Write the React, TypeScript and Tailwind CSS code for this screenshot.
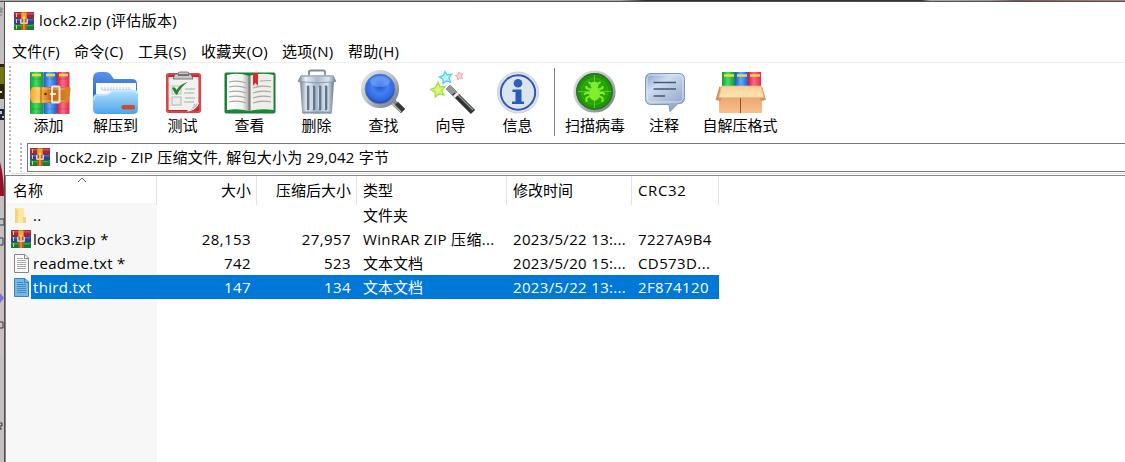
import React from 'react';

function RarIcon({ className = '' }: { className?: string }) {
  return (
    <svg viewBox="0 0 20 18" className={`shrink-0 ${className}`}>
      <rect x="0" y="0" width="20" height="6" rx="0.6" fill="#a3263f" />
      <rect x="1" y="1" width="18.5" height="1.5" fill="#cf4d63" />
      <rect x="0" y="6" width="20" height="6" rx="0.6" fill="#333f94" />
      <rect x="1" y="7" width="18" height="1.5" fill="#5968bd" />
      <rect x="0" y="12" width="20" height="6" rx="0.6" fill="#167a35" />
      <rect x="1" y="13" width="18" height="1.5" fill="#38a555" />
      <path d="M2.5 1v4M2.5 7v4M2.5 13v4" stroke="#e6d05b" strokeWidth="1" />
      <rect x="7.2" y="0" width="5.6" height="18" rx="1" fill="#b85e1c" />
      <rect x="7.4" y="0.5" width="5.2" height="6.5" rx="1" fill="#f6a526" />
      <path d="M6.8 6.8v4.4h6.4v-4.4" fill="none" stroke="#f3eee5" strokeWidth="1.2" />
      <path d="M10 4.5v6" stroke="#ffe1a0" strokeWidth="1.3" />
      <path d="M10 12v6" stroke="#e68b2d" strokeWidth="1.8" />
    </svg>
  );
}

function Defs() {
  return (
    <svg width="0" height="0" className="absolute">
      <defs>
        <linearGradient id="green"><stop stopColor="#129b35" /><stop offset=".45" stopColor="#45dc67" /><stop offset="1" stopColor="#119336" /></linearGradient>
        <linearGradient id="blue"><stop stopColor="#1b58c5" /><stop offset=".45" stopColor="#65a8ff" /><stop offset="1" stopColor="#1d5ecb" /></linearGradient>
        <linearGradient id="red"><stop stopColor="#d2173b" /><stop offset=".45" stopColor="#ff6b86" /><stop offset="1" stopColor="#e02a4d" /></linearGradient>
        <linearGradient id="belt"><stop stopColor="#f0a52c" /><stop offset=".2" stopColor="#ffcf63" /><stop offset=".5" stopColor="#c86a14" /><stop offset="1" stopColor="#d98428" /></linearGradient>
        <linearGradient id="folder" x2="0" y2="1"><stop stopColor="#b5e2ff" /><stop offset="1" stopColor="#4ba3e9" /></linearGradient>
        <linearGradient id="folderBack" x2="0" y2="1"><stop stopColor="#5a93ea" /><stop offset="1" stopColor="#265fc6" /></linearGradient>
        <linearGradient id="metal"><stop stopColor="#6f8196" /><stop offset=".2" stopColor="#e9f1f8" /><stop offset=".5" stopColor="#a9b9ca" /><stop offset=".8" stopColor="#dce6ef" /><stop offset="1" stopColor="#66788d" /></linearGradient>
        <linearGradient id="rim" x2="1" y2="1"><stop stopColor="#e3e6e9" /><stop offset=".5" stopColor="#b9c0c7" /><stop offset="1" stopColor="#6f7780" /></linearGradient>
        <radialGradient id="lens" cy=".42"><stop stopColor="#2352cc" /><stop offset=".45" stopColor="#4380f0" /><stop offset=".8" stopColor="#3169df" /><stop offset="1" stopColor="#234bb5" /></radialGradient>
        <linearGradient id="bubble" x2=".7" y2="1"><stop stopColor="#7f9ccc" /><stop offset=".35" stopColor="#cfdcf0" /><stop offset=".6" stopColor="#b7c7e0" /><stop offset="1" stopColor="#8fa4c6" /></linearGradient>
        <linearGradient id="carton" x2="0" y2="1"><stop stopColor="#e09a64" /><stop offset=".5" stopColor="#f0aa74" /><stop offset="1" stopColor="#f9c08c" /></linearGradient>
        <linearGradient id="flap" x2="0" y2="1"><stop stopColor="#fbd096" /><stop offset="1" stopColor="#ffe3b4" /></linearGradient>
        <linearGradient id="page"><stop stopColor="#fff" /><stop offset=".7" stopColor="#f2f2ee" /><stop offset="1" stopColor="#aaa" /></linearGradient>
        <radialGradient id="scan"><stop stopColor="#38bd0c" /><stop offset="1" stopColor="#159000" /></radialGradient>
      </defs>
    </svg>
  );
}

function Icon({ name }: { name: string }) {
  return (
    <svg width="52" height="46" viewBox="0 0 52 46" className="shrink-0 overflow-visible">
      {name === 'add' && <>
        <rect x="7" y="3" width="13.5" height="42" rx="1" fill="url(#green)" />
        <rect x="20.5" y="3" width="13.5" height="42" rx="1" fill="url(#blue)" />
        <rect x="34" y="3" width="12.5" height="42" rx="1" fill="url(#red)" />
        <path d="M9 6h9M23 6h9M36 6h9" stroke="#eadb46" strokeWidth="2.5" />
        <path d="M9 10h9M23 10h9M36 10h9M9 40h9M23 40h9M36 40h9" stroke="#00000028" />
        <path d="M10 18H46q2 0 1.5 3l-2 12q-.2 1-2 1H10q-3-2-3-8t3-8Z" fill="url(#belt)" />
        <path d="M11 20h31M11 32h31" stroke="#ffe09a" strokeWidth=".8" opacity=".7" />
        <path d="M18 18v16" stroke="#a75712" />
        <circle cx="22.5" cy="25" r="1.3" fill="#64340d" />
        <rect x="29" y="17.5" width="7.5" height="16" rx="1" fill="none" stroke="#eeeae2" strokeWidth="2" />
        <path d="M27 25h6" stroke="#fff5dd" strokeWidth="1.8" />
      </>}
      {name === 'extract' && <>
        <path d="M3 10q0-7 6-7h6q4 0 6 3l3 4h18q5 0 5 5v15H3Z" fill="url(#folderBack)" />
        <path d="M6 14h40v16H6Z" fill="#f7fbfd" />
        <path d="M12 21h30M12 18v3m3-3v3m3-3v3m3-3v3m3-3v3m3-3v3m3-3v3m3-3v3m3-3v3m3-3v3" stroke="#c3ccd5" strokeWidth="1" />
        <path d="M3 30q0-5 4-5h8q4 0 6-3 1-1 3-1h21q3 0 3 4v15q0 5-5 5H8q-5 0-5-5Z" fill="url(#folder)" />
        <path d="M4 31q0-5 4-5h7q4 0 6-3 1-1 3-1h20q3 0 3 3" fill="none" stroke="#d4f2ff" />
        <rect x="32" y="36.5" width="12.5" height="3.5" rx="1" fill="#df4721" stroke="#b94126" strokeWidth=".7" />
      </>}
      {name === 'test' && <>
        <rect x="9" y="4" width="35" height="40" rx="3" fill="#cf2432" />
        <rect x="10" y="5" width="33" height="38" rx="2" fill="none" stroke="#ea6265" />
        <path d="M11.5 8h30v26l-7 7h-23Z" fill="#f1f1ed" />
        <path d="M41.5 34h-5q0 5-6 8 9-1 11-8Z" fill="#c6c8c4" stroke="#fff" />
        <path d="M16 10l2-5h3q0-2 2-2h7q2 0 2 2h2l2 5Z" fill="#c5c7cb" stroke="#6d5b60" strokeWidth=".8" />
        <path d="M21 6h11" stroke="#555" strokeWidth="1.5" />
        <rect x="15" y="17" width="9" height="8" fill="#ececea" stroke="#c1c1be" />
        <rect x="15" y="28" width="9" height="8" fill="#ececea" stroke="#b5b5b2" />
        <path d="M28 20h10M27 24h10M28 29h10M27 33h10" stroke="#aaa" strokeWidth="1.1" />
        <path d="M15 19q3-2 4.5 2Q23 15 31 13q-7 4-11 13-2-1-5-7Z" fill="#21862f" />
      </>}
      {name === 'view' && <>
        <rect x="1" y="4" width="50" height="40" rx="1" fill="#128c36" stroke="#27733a" />
        <path d="M3 6q12-3 22 1v35q-11-3-22-1Z" fill="url(#page)" />
        <path d="M25.5 7q12-4 24-1v35q-12-2-24 1Z" fill="#f0eeea" />
        <path d="M25.5 7v35" stroke="#808080" strokeWidth="2.2" />
        <path d="M5 13q9-2 17 1M5 18q9-2 17 1M5 23q9-2 17 1M5 28q9-2 17 1M5 33q9-2 17 1M29 19q9-3 18-1M29 24q9-3 18-1M29 29q9-3 18-1M29 34q9-3 18-1M36 12l11-.5" fill="none" stroke="#aaa9a6" strokeWidth="1.2" />
        <path d="M29 4h5v13l-2.5-3-2.5 3Z" fill="#d92c29" />
      </>}
      {name === 'delete' && <>
        <path d="M18 7V3q0-1.5 1.5-1.5h13Q34 1.5 34 3v4" fill="none" stroke="#7f8b97" strokeWidth="1.8" />
        <path d="M9 12h34l-2 31q0 2-2 2H13q-2 0-2-2Z" fill="url(#metal)" />
        <path d="M17 18v22M23 18v22M29 18v22M35 18v22" stroke="#63758b" strokeWidth="2.8" strokeLinecap="round" />
        <path d="M15.5 18v22M21.5 18v22M27.5 18v22M33.5 18v22" stroke="#e0e9f1" strokeWidth=".8" />
        <path d="M10 6.5h32l3 6q-18 3-38 0Z" fill="url(#metal)" stroke="#7b8b9d" strokeWidth=".8" />
        <path d="M10 7h32" stroke="#aab7c4" strokeWidth="2" />
        <path d="M12 43.5h28" stroke="#8699ad" strokeWidth="2" />
      </>}
      {name === 'find' && <>
        <path d="m33 31 12 11" stroke="#888" strokeWidth="6" />
        <path d="m38 35 7 7" stroke="#363636" strokeWidth="6" />
        <path d="m34 34 9 9" stroke="#bdbdbd" strokeWidth="1.5" />
        <circle cx="22" cy="20" r="17" fill="url(#lens)" stroke="url(#rim)" strokeWidth="4.2" />
        <circle cx="22" cy="20" r="15" fill="none" stroke="#6a84aa" strokeWidth=".8" />
        <ellipse cx="22" cy="12.5" rx="10" ry="5.5" fill="#8fbcff" opacity=".42" />
      </>}
      {name === 'wizard' && <>
        <path d="m23 18 25 25" stroke="#303335" strokeWidth="6" />
        <path d="m25 18 23 23" stroke="#92989b" strokeWidth="1.3" />
        <path d="m23 18 6 6" stroke="#94979a" strokeWidth="6" />
        <path d="m30 25 2 2" stroke="#f0f0f0" strokeWidth="6" />
        <path d="m13 13.5 2 4.4 5-.3-3.4 3.9 2.2 4.4-4.8-1.2-3.7 3.2-.3-4.9-4.2-2.5 4.5-1.8Z" fill="#dcf777" stroke="#a5e04c" strokeWidth="1.5" />
        <path d="m20 2.5 2 3.3 4.5-.4-2.5 3.5 1.6 4.1-4.2-1-3.2 2.4-.4-4.2-3.5-2.2 4.2-1.6Z" fill="#b7f3fc" stroke="#55d0ee" strokeWidth="1.4" />
        <path d="m34 3 1.3 2.2 2.6-.3-1.6 2.2 1.2 2.5-2.8-.6-2 1.8-.2-2.7-2.2-1.5 2.6-1Z" fill="#ffd4d5" stroke="#f4a0aa" />
      </>}
      {name === 'info' && <>
        <circle cx="26" cy="23.5" r="20.5" fill="#dfe2e8" stroke="#cbcfd6" />
        <circle cx="26" cy="23.5" r="17.2" fill="#dbe5f0" stroke="#3556b9" strokeWidth="2" />
        <circle cx="26" cy="14.2" r="4.3" fill="#315eb7" />
        <path d="M20.5 20.5h9v12H32V35H20v-2.5h3.5V23h-3Z" fill="#2759c2" />
      </>}
      {name === 'scan' && <>
        <circle cx="25.5" cy="22.5" r="19.6" fill="url(#scan)" stroke="url(#rim)" strokeWidth="3" />
        <circle cx="25.5" cy="22.5" r="17.7" fill="none" stroke="#356d2a" strokeWidth="1.5" />
        <path d="M25.5 6v33M9 22.5h33" stroke="#78da3c" strokeWidth=".7" />
        <circle cx="25.5" cy="22.5" r="13" fill="none" stroke="#60bd2d" strokeWidth=".5" />
        <ellipse cx="25.5" cy="24.5" rx="5.5" ry="7.2" fill="#83ee31" />
        <ellipse cx="25.5" cy="16" rx="4" ry="3.2" fill="#83ee31" />
        <path d="m22 15-2.5-2m9.5 2 2.5-2M21 20.5l-3.5-1.5-.5-2m13 3.5 3.5-1.5.5-2M20 24h-3l-2 1.5m16-1.5h3l2 1.5M21 27l-3.5 2v4m12.5-6 3.5 2v4" fill="none" stroke="#83ee31" strokeWidth="2" />
      </>}
      {name === 'comment' && <>
        <path d="M13 4.5h28q5.5 0 5.5 6v18q0 6-5.5 6h-1l-8 8-1-7H13q-5.5 0-5.5-6v-19q0-6 5.5-6Z" fill="url(#bubble)" stroke="#8096ba" />
        <path d="M13 6h27q5 0 5 5v17q0 5-5 5H13q-4 0-4-5V11q0-5 4-5Z" fill="none" stroke="#dbe8f8" strokeWidth=".9" />
        <path d="M15.5 13.5H38M15.5 20H38M15.5 27H27" stroke="#475875" strokeWidth="1.6" />
      </>}
      {name === 'sfx' && <>
        <rect x="8" y="3" width="13" height="16" fill="url(#green)" />
        <rect x="21" y="3" width="13" height="16" fill="url(#blue)" />
        <rect x="34" y="3" width="13" height="16" fill="url(#red)" />
        <path d="M10 6.5h10M23 6.5h10M36 6.5h10" stroke="#e8db43" strokeWidth="2.4" />
        <path d="M5 18h43v26H5Z" fill="url(#carton)" />
        <path d="M26.5 29v15" stroke="#965328" />
        <path d="M5.5 17 1.5 31l5 1 2-6Zm42.5 0 4 14-5 1-3-6Z" fill="#d49162" />
        <path d="M7.5 17H47l3 11.5H5Z" fill="url(#flap)" stroke="#edbb81" strokeWidth=".7" />
      </>}
    </svg>
  );
}

const tools = [
  ['add', '添加', 'w-[67px]'], ['extract', '解压到', 'w-[67px]'], ['test', '测试', 'w-[67px]'],
  ['view', '查看', 'w-[67px]'], ['delete', '删除', 'w-[67px]'], ['find', '查找', 'w-[67px]'],
  ['wizard', '向导', 'w-[67px]'], ['info', '信息', 'w-[67px]'],
];
const moreTools = [['scan', '扫描病毒', 'w-[76px]'], ['comment', '注释', 'w-[62px]'], ['sfx', '自解压格式', 'w-[90px]']];

function Tool({ item }: { item: string[] }) {
  return (
    <button className={`flex shrink-0 flex-col items-center whitespace-nowrap ${item[2]}`}>
      <Icon name={item[0]} />
      <span className="leading-[20px]">{item[1]}</span>
    </button>
  );
}

function Doc({ selected }: { selected?: boolean }) {
  return (
    <svg width="15" height="19" viewBox="0 0 15 19">
      <path d="M.5.5h10.5l3.5 3.5v14.5H.5Z" fill={selected ? '#76b7e8' : '#fafafa'} stroke={selected ? '#3c82b8' : '#858585'} />
      <path d="M10.5.7V4.5h3.7" fill="none" stroke={selected ? '#3c82b8' : '#858585'} />
      <path d="M3 4.5h6M3 6.5h9M3 8.5h9M3 10.5h9M3 12.5h9M3 14.5h9" stroke={selected ? '#3f8cc6' : '#aaa'} />
    </svg>
  );
}

const rows = [
  { icon: 'folder', name: '..', size: '', packed: '', type: '文件夹', date: '', crc: '' },
  { icon: 'rar', name: 'lock3.zip *', size: '28,153', packed: '27,957', type: 'WinRAR ZIP 压缩...', date: '2023/5/22 13:...', crc: '7227A9B4' },
  { icon: 'doc', name: 'readme.txt *', size: '742', packed: '523', type: '文本文档', date: '2023/5/20 15:...', crc: 'CD573D...' },
  { icon: 'doc', name: 'third.txt', size: '147', packed: '134', type: '文本文档', date: '2023/5/22 13:...', crc: '2F874120', selected: true },
];
const cols = 'grid grid-cols-[125px_100px_100px_150px_125px_88px]';

export default function App() {
  return (
    <div className="flex h-[462px] w-[1125px] flex-col overflow-hidden bg-white font-['Open_Sans','Noto_Sans_CJK_SC',sans-serif] text-[15px] leading-[24px] text-black">
      <Defs />
      <div className="h-[2px] shrink-0 border-b border-[#55504f] bg-[linear-gradient(90deg,#a9a9a9_0,#aaa_620px,#302e2e_645px,#393333_922px,#aaa_930px,#999_990px,#765755_1015px,#af8278_1125px)]" />
      <div className="flex min-h-0 flex-1">
        <svg width="4" height="460" className="shrink-0 bg-[#c4bfc1]">
          <path d="M0 6h2v2H0v2h3M0 13h2" stroke="#777" fill="none" />
          <rect y="62" width="4" height="35" fill="#282406" />
          <rect y="65" width="4" height="17" fill="#77770b" />
          <path d="M0 90h2" stroke="#ddd" strokeWidth="2" />
          <path d="M0 108h3v5H1v4h3" stroke="#182538" fill="none" strokeWidth="2" />
          <path d="M0 160q4 15 4 34H0Z" fill="#921424" />
          <path d="M0 217h4v6H0m0 13h3v7H0" stroke="#353d4b" fill="none" />
          <rect y="247" width="4" height="107" fill="#cabfc1" />
          <path d="m0 291 4 5-4 5Z" fill="#7973d6" />
          <path d="M0 320h3v6H0m0 95h2v3H0v3h2" stroke="#3a3638" fill="none" />
        </svg>
        <div className="flex min-w-0 flex-1 flex-col border-l border-[#4e4e4e]">
          <header className="flex h-[38px] shrink-0 items-center gap-[5px] pl-[9px]">
            <RarIcon className="h-[18px] w-[20px]" />
            <span className="pb-[2px] tracking-[0.3px]">lock2.zip (评估版本)</span>
          </header>
          <nav className="flex h-[23px] shrink-0 items-center border-b border-[#f0f0f0] pl-[7px] tracking-[0.25px]">
            <span className="w-[62px]">文件(F)</span><span className="w-[64px]">命令(C)</span><span className="w-[63px]">工具(S)</span>
            <span className="w-[81px]">收藏夹(O)</span><span className="w-[66px]">选项(N)</span><span>帮助(H)</span>
          </nav>
          <section className="flex h-[112px] shrink-0">
            <div className="ml-[4px] mt-[3px] h-[107px] w-[2px] bg-[repeating-linear-gradient(180deg,#b9b9b9_0_2px,transparent_2px_4px)]" />
            <div className="flex min-w-0 flex-1 flex-col">
              <div className="flex h-[80px] shrink-0 items-start pl-[4px] pt-[6px]">
                {tools.map((t) => <Tool key={t[0]} item={t} />)}
                <div className="ml-[3px] mr-[2px] -mt-px h-[68px] w-px bg-[#808080]" />
                {moreTools.map((t) => <Tool key={t[0]} item={t} />)}
              </div>
              <div className="flex h-[29px] shrink-0">
                <div className="ml-[9px] mr-[5px] h-[29px] w-[2px] bg-[repeating-linear-gradient(180deg,#b9b9b9_0_2px,transparent_2px_4px)]" />
                <div className="flex flex-1 items-center gap-[5px] border border-r-0 border-[#777] pl-[2px]">
                  <RarIcon className="mb-[2px] h-[18px] w-[20px]" />
                  <span className="pb-[2px] tracking-[0.22px]">lock2.zip - ZIP 压缩文件, 解包大小为 29,042 字节</span>
                </div>
              </div>
              <div className="mt-px h-px bg-[#ddd]" />
            </div>
          </section>
          <main className="flex min-h-0 flex-1 flex-col border-l border-t border-[#858585] bg-[linear-gradient(90deg,#f7f7f7_151px,#fff_151px)]">
            <div className="grid h-[27px] shrink-0 grid-cols-[151px_100px_100px_150px_125px_87px_1fr] bg-white leading-[29px]">
              <div className="relative border-r border-[#e3e3e3] pl-[7px]">名称
                <svg width="10" height="6" viewBox="0 0 10 6" className="absolute left-[71px] top-[1px]"><path d="m1 5 4-4 4 4" fill="none" stroke="#666" /></svg>
              </div>
              <div className="border-r border-[#e3e3e3] pr-[5px] text-right">大小</div>
              <div className="border-r border-[#e3e3e3] pr-[5px] text-right">压缩后大小</div>
              <div className="border-r border-[#e3e3e3] pl-[6px]">类型</div>
              <div className="border-r border-[#e3e3e3] pl-[6px]">修改时间</div>
              <div className="border-r border-[#e3e3e3] pl-[6px] tracking-[0.6px]">CRC32</div>
            </div>
            {rows.map((r) => (
              <div key={r.name} className="flex h-[24px] shrink-0">
                <div className="flex w-[25px] shrink-0 items-center justify-center pl-[5px]">
                  {r.icon === 'folder' && <svg width="16" height="17" viewBox="0 0 16 17"><path d="M2 1h9v15H2Z" fill="#ffe79f" /><path d="m2 1 3 2v13H2Zm8 9h3v6h-3Z" fill="#f5d57c" /></svg>}
                  {r.icon === 'rar' && <RarIcon className="h-[18px] w-[20px]" />}
                  {r.icon === 'doc' && <Doc selected={r.selected} />}
                </div>
                <div className={`${cols} whitespace-nowrap ${r.selected ? 'bg-[#0078d7] text-white' : ''}`}>
                  <div className="pl-[2px] tracking-[0.3px]">{r.name}</div>
                  <div className="pr-[5px] text-right tracking-[0.4px]">{r.size}</div>
                  <div className="pr-[5px] text-right tracking-[0.4px]">{r.packed}</div>
                  <div className={`pl-[7px] ${r.icon === 'rar' ? 'tracking-[0.33px]' : ''}`}>{r.type}</div>
                  <div className="pl-[7px] tracking-[0.33px]">{r.date}</div>
                  <div className="pl-[7px] tracking-[0.4px]">{r.crc}</div>
                </div>
              </div>
            ))}
          </main>
        </div>
      </div>
    </div>
  );
}
